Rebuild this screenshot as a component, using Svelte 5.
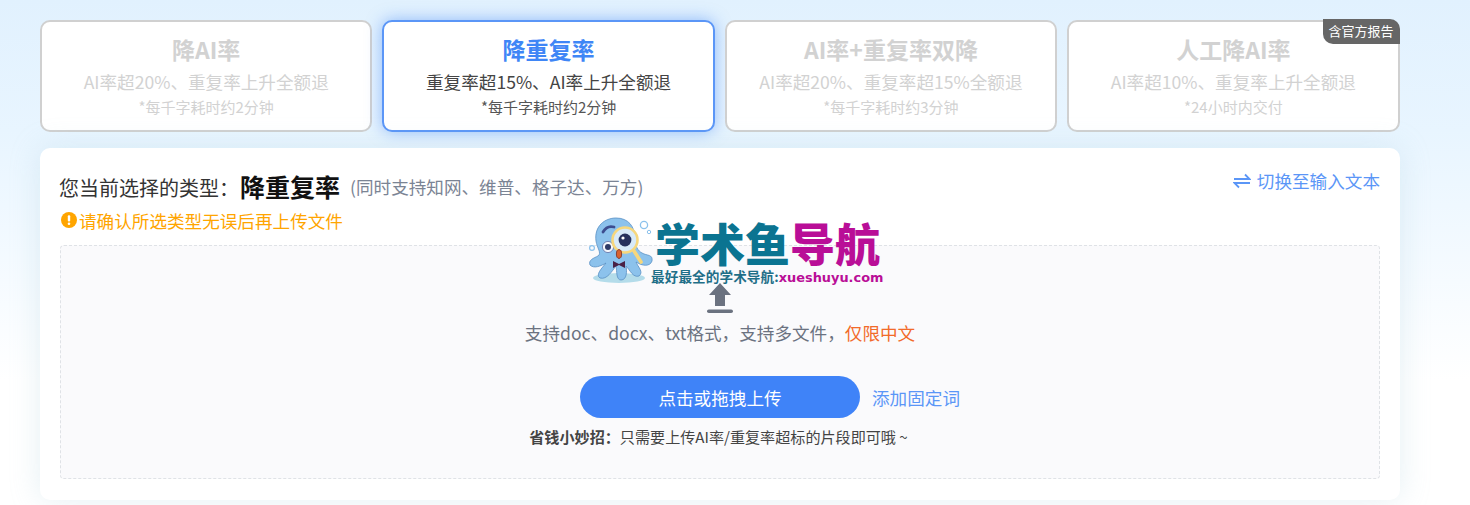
<script>
    const modes = [
        {title: '降AI率', desc: 'AI率超20%、重复率上升全额退', note: '*每千字耗时约2分钟'},
        {title: '降重复率', desc: '重复率超15%、AI率上升全额退', note: '*每千字耗时约2分钟', active: true},
        {title: 'AI率+重复率双降', desc: 'AI率超20%、重复率超15%全额退', note: '*每千字耗时约3分钟'},
        {title: '人工降AI率', desc: 'AI率超10%、重复率上升全额退', note: '*24小时内交付', badge: '含官方报告'}
    ]
</script>

<div class="page">
    <div class="modes">
        {#each modes as mode}
            <div class={mode.active ? 'mode active' : 'mode'}>
                {#if mode.badge}
                    <span class="badge">{mode.badge}</span>
                {/if}
                <h3>{mode.title}</h3>
                <p class="desc">{mode.desc}</p>
                <p class="note">{mode.note}</p>
            </div>
        {/each}
    </div>

    <section class="panel">
        <div class="head">
            <div>
                <div class="current">
                    <span class="label">您当前选择的类型：</span>
                    <strong>降重复率</strong>
                    <span class="support">(同时支持知网、维普、格子达、万方)</span>
                </div>
                <div class="warn">
                    <svg width="16" height="16" viewBox="0 0 16 16"><circle cx="8" cy="8" r="8" fill="#ffa500"/><rect x="6.8" y="3.2" width="2.4" height="6.4" rx="1" fill="#fff"/><circle cx="8" cy="11.7" r="1.3" fill="#fff"/></svg>
                    <span>请确认所选类型无误后再上传文件</span>
                </div>
            </div>
            <div class="switch">
                <svg width="18" height="16" viewBox="0 0 18 16" fill="none" stroke="#5b96f7" stroke-width="1.8"><path d="M1 6H16.5L12 1.5"/><path d="M17 10H1.5L6 14.5"/></svg>
                <span>切换至输入文本</span>
            </div>
        </div>

        <div class="drop">
            <svg class="upload" width="28" height="32" viewBox="0 0 28 32"><path d="M14 1L25 13H19V24H9V13H3Z" fill="#6b7280"/><rect x="1" y="27.5" width="26" height="3.6" rx="1.8" fill="#6b7280"/></svg>
            <p class="formats">支持doc、docx、txt格式，支持多文件，<span>仅限中文</span></p>
            <div class="actions">
                <button>点击或拖拽上传</button>
                <span class="words">添加固定词</span>
            </div>
            <p class="tip"><b>省钱小妙招：</b>只需要上传AI率/重复率超标的片段即可哦 ~</p>
        </div>

        <div class="logo">
            <svg width="66" height="68" viewBox="0 0 66 68">
                <ellipse cx="30" cy="61" rx="26" ry="5" fill="#b4dcea"/>
                <path d="M7 24C5 9 16 1 27 1C39 1 46 9 46 22C46 29 49 34 53 36C58 39 64 37 63 44C61 50 53 49 47 45C49 50 55 55 50 59C44 61 41 53 37 49C38 54 38 63 32 63C27 63 28 54 27 49C23 54 18 63 11 61C6 58 13 51 17 46C12 49 5 52 1 48C-1 43 5 41 9 39C13 36 8 31 7 24Z" fill="#8cc2ec" stroke="#5a90c4" stroke-width=".8"/>
                <path d="M14 15Q18 8 25 10" fill="none" stroke="#3d4d8f" stroke-width="2.8" stroke-linecap="round"/>
                <circle cx="19" cy="30" r="5.6" fill="#f4f6fb" stroke="#7385b5"/>
                <circle cx="19" cy="30" r="3" fill="#2f3a66"/>
                <circle cx="36" cy="23" r="12.5" fill="#d8eaf8" stroke="#f6d77d" stroke-width="2.6"/>
                <circle cx="36" cy="23" r="6.4" fill="#27315c"/>
                <circle cx="34" cy="21" r="1.6" fill="#fff"/>
                <path d="M45 34L52 45" stroke="#f6d77d" stroke-width="3.6" stroke-linecap="round"/>
                <ellipse cx="30" cy="37" rx="2.6" ry="4.4" fill="#d9622f" stroke="#7a2c20" stroke-width=".8"/>
                <path d="M24 44L30 47L36 44V51L30 48L24 51Z" fill="#4a2145"/>
                <circle cx="55" cy="8" r="3.6" fill="none" stroke="#8cc2ec" stroke-width="1.3"/>
                <circle cx="60" cy="15" r="1.7" fill="none" stroke="#8cc2ec"/>
                <circle cx="3" cy="31" r="2.4" fill="none" stroke="#8cc2ec" stroke-width="1.2"/>
            </svg>
            <div class="brand">
                <div class="name">学术鱼<span>导航</span></div>
                <div class="slogan">最好最全的学术导航:<span>xueshuyu.com</span></div>
            </div>
        </div>
    </section>
</div>

<style>
    :global(body) {
        background: linear-gradient(180deg, #e1f1fe 0, #e8f5ff 130px, #fff 380px);
    }

    * {
        box-sizing: border-box;
    }

    .page {
        width: 1470px;
        height: 505px;
        overflow: hidden;
        padding: 20px 70px 0 40px;
        font-family: "Noto Sans CJK SC", "Noto Sans", sans-serif;
    }

    .modes {
        display: grid;
        grid-template-columns: repeat(4, 1fr);
        gap: 10px;
        margin-right: .5px;
    }

    .mode {
        position: relative;
        height: 112px;
        background: #fff;
        border: 2px solid #d0d0d0;
        border-radius: 10px;
        text-align: center;
        color: #d2d2d2;
        padding-top: 10px;
    }

    .mode.active {
        border-color: #5b96f7;
        color: #555;
        box-shadow: 0 0 16px rgba(59, 130, 246, .5);
    }

    .mode h3 {
        margin: 0;
        font-size: 23px;
        line-height: 34px;
        font-weight: 700;
    }

    .mode.active h3 {
        color: #3f86f6;
    }

    .desc {
        margin: 1px 0 0;
        font-size: 17.6px;
        line-height: 30px;
    }

    .mode.active .desc {
        color: #444;
    }

    .note {
        margin: 0;
        font-size: 15px;
        line-height: 20px;
    }

    .badge {
        position: absolute;
        top: -3px;
        right: -2px;
        width: 77px;
        height: 25px;
        background: #666;
        color: #fff;
        font-size: 13px;
        line-height: 24px;
        border-radius: 0 10px 0 10px;
    }

    .panel {
        position: relative;
        margin-top: 16px;
        height: 352px;
        background: #fff;
        border-radius: 10px;
        padding: 20px 20px 21px;
        box-shadow: 0 0 30px rgba(160, 200, 215, .28);
    }

    .head {
        display: flex;
        justify-content: space-between;
        align-items: flex-start;
        height: 78px;
    }

    .current {
        display: flex;
        align-items: center;
        height: 38px;
        margin-left: -1px;
    }

    .label {
        font-size: 20px;
        color: #333;
        margin-right: 1px;
    }

    .current strong {
        font-size: 25px;
        color: #111;
        margin-right: 10px;
        margin-top: -2px;
    }

    .support {
        font-size: 17.6px;
        color: #7b8494;
        margin-top: -2px;
    }

    .warn {
        display: flex;
        align-items: center;
        gap: 2px;
        height: 28px;
        font-size: 17.6px;
        color: #ffa500;
        margin-left: 1px;
    }

    .switch {
        display: flex;
        align-items: center;
        gap: 6px;
        font-size: 17.6px;
        color: #5b96f7;
        height: 25px;
    }

    .drop {
        height: 234px;
        background: #fafafc;
        border: 1px dashed #dfe2e6;
        border-radius: 4px;
        display: flex;
        flex-direction: column;
        align-items: center;
        padding-top: 36px;
        margin-top: -1px;
    }

    .formats {
        margin: 4px 0 0;
        font-size: 17.6px;
        line-height: 30px;
        color: #6b7280;
    }

    .formats span {
        color: #f26b2a;
    }

    .actions {
        display: flex;
        align-items: center;
        gap: 12px;
        margin: 28px 0 0 100px;
    }

    button {
        width: 280px;
        height: 42px;
        border: 0;
        border-radius: 21px;
        background: #3f83f8;
        color: #fff;
        font: inherit;
        font-size: 17.6px;
    }

    .words {
        font-size: 17.6px;
        color: #5b96f7;
        width: 88px;
        white-space: nowrap;
    }

    .tip {
        margin: 6px 3px 0 0;
        font-size: 15.1px;
        line-height: 24px;
        color: #444;
    }

    .logo {
        position: absolute;
        left: 549px;
        top: 69px;
        display: flex;
        align-items: flex-start;
    }

    .brand {
        margin-left: -4px;
    }

    .name {
        font-size: 45px;
        line-height: 52px;
        font-weight: 900;
        color: #0b7491;
        white-space: nowrap;
        padding-left: 4px;
    }

    .name span {
        color: #b90e97;
    }

    .slogan {
        font-size: 13.6px;
        line-height: 14px;
        font-weight: 700;
        color: #1f6f88;
        white-space: nowrap;
        letter-spacing: .1px;
    }

    .slogan span {
        font-family: "DejaVu Sans", sans-serif;
        font-size: 12.9px;
        color: #b90e97;
        letter-spacing: 0;
    }
</style>
